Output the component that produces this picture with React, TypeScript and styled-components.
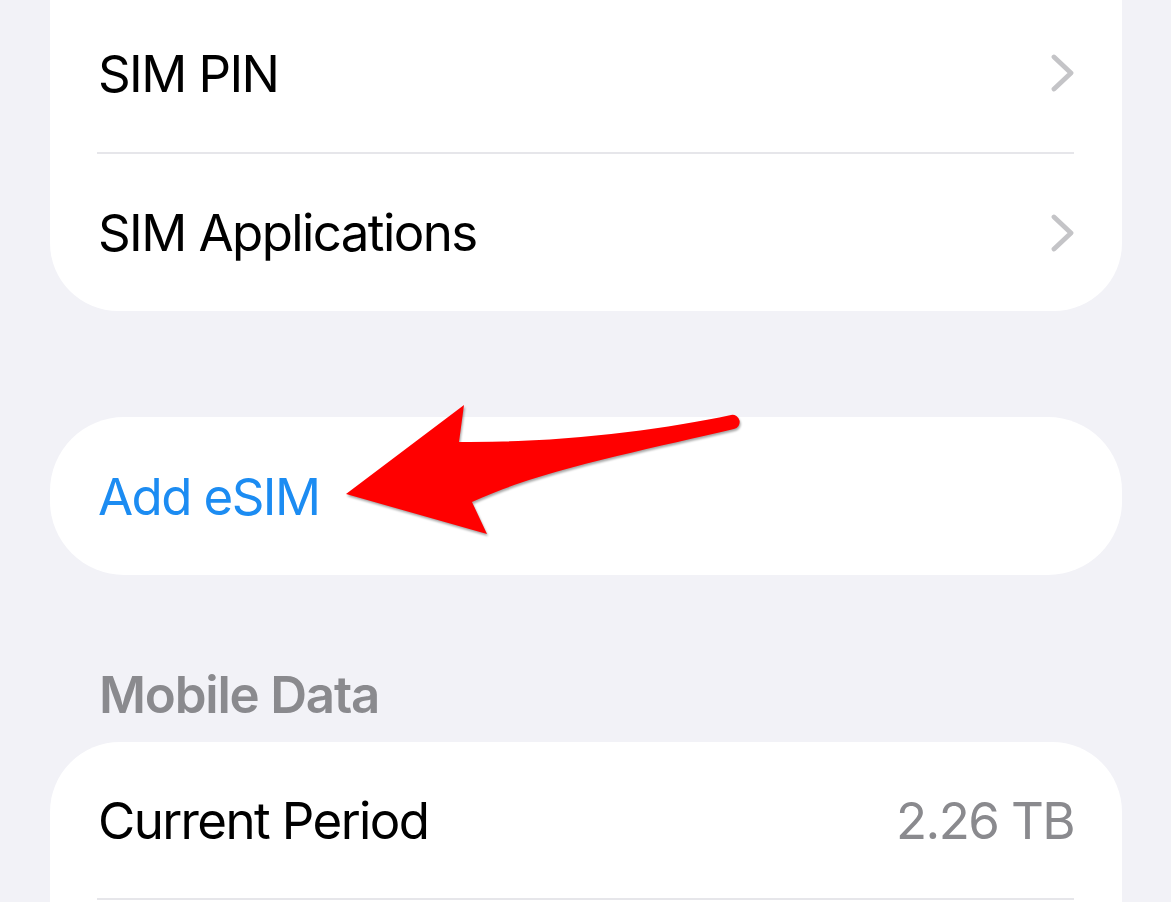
import React from "react";
import styled, { createGlobalStyle } from "styled-components";

const GlobalStyle = createGlobalStyle`
  html, body {
    margin: 0;
    padding: 0;
    background: #f2f2f7;
  }
  body {
    font-family: Inter, "Liberation Sans", Arial, sans-serif;
    -webkit-font-smoothing: antialiased;
  }
`;

const Page = styled.div`
  position: relative;
  width: 1171px;
  height: 902px;
  overflow: hidden;
  background: #f2f2f7;
  padding: 0 49px 0 50px;
  box-sizing: border-box;
  display: flex;
  flex-direction: column;
`;

const Card = styled.div<{ $continued?: boolean; $radius?: number; $gap?: number }>`
  background: #ffffff;
  flex-shrink: 0;
  margin-top: ${(p) => (p.$continued ? -6 : p.$gap ?? 0)}px;
  border-radius: ${(p) =>
    p.$continued ? `0 0 ${p.$radius ?? 66}px ${p.$radius ?? 66}px` : `${p.$radius ?? 66}px`};
  display: flex;
  flex-direction: column;
`;

const Row = styled.div<{ $height?: number }>`
  height: ${(p) => p.$height ?? 158}px;
  display: flex;
  align-items: center;
  justify-content: space-between;
  padding: 0 48px;
  flex-shrink: 0;
`;

const Label = styled.span<{ $accent?: boolean }>`
  font-size: 51px;
  letter-spacing: -1.6px;
  color: ${(p) => (p.$accent ? "#1c8cf2" : "#000000")};
  white-space: nowrap;
`;

const Value = styled.span`
  font-size: 51px;
  letter-spacing: -1.6px;
  color: #8a8a8e;
  white-space: nowrap;
`;

const Separator = styled.div`
  height: 2px;
  margin: 0 48px 0 47px;
  background: #e6e6ea;
  flex-shrink: 0;
`;

const SectionHeader = styled.div`
  padding: 94px 48px 21px 49px;
  font-size: 51px;
  line-height: 52px;
  font-weight: 600;
  letter-spacing: -1.2px;
  color: #8a8a8e;
  flex-shrink: 0;
`;

const ArrowLayer = styled.svg`
  position: absolute;
  left: 0;
  top: 0;
  width: 1171px;
  height: 902px;
  pointer-events: none;
  filter: drop-shadow(1px 2px 1.2px rgba(0, 0, 0, 0.35));
`;

const Chevron = () => (
  <svg width="24" height="38" viewBox="0 0 24 38" aria-hidden="true">
    <polyline
      points="4,3 21,19 4,35"
      fill="none"
      stroke="#c4c4c7"
      strokeWidth="4.8"
      strokeLinecap="round"
      strokeLinejoin="round"
    />
  </svg>
);

export default function App() {
  return (
    <>
      <GlobalStyle />
      <Page>
        <Card $continued $radius={68}>
          <Row>
            <Label>SIM PIN</Label>
            <Chevron />
          </Row>
          <Separator />
          <Row $height={157}>
            <Label>SIM Applications</Label>
            <Chevron />
          </Row>
        </Card>

        <Card $gap={106} $radius={74}>
          <Row>
            <Label $accent>Add eSIM</Label>
          </Row>
        </Card>

        <SectionHeader>Mobile Data</SectionHeader>

        <Card $radius={70}>
          <Row $height={156}>
            <Label>Current Period</Label>
            <Value>2.26 TB</Value>
          </Row>
          <Separator />
          <Row />
        </Card>

        <ArrowLayer viewBox="0 0 1171 902">
          <path
            d="M346,494 L464,405 L459,442 C560,443 660,430 731,415 A7,7 0 0 1 734,429 C650,449 540,470 472,502 L487,534 Z"
            fill="#ff0000"
          />
        </ArrowLayer>
      </Page>
    </>
  );
}
